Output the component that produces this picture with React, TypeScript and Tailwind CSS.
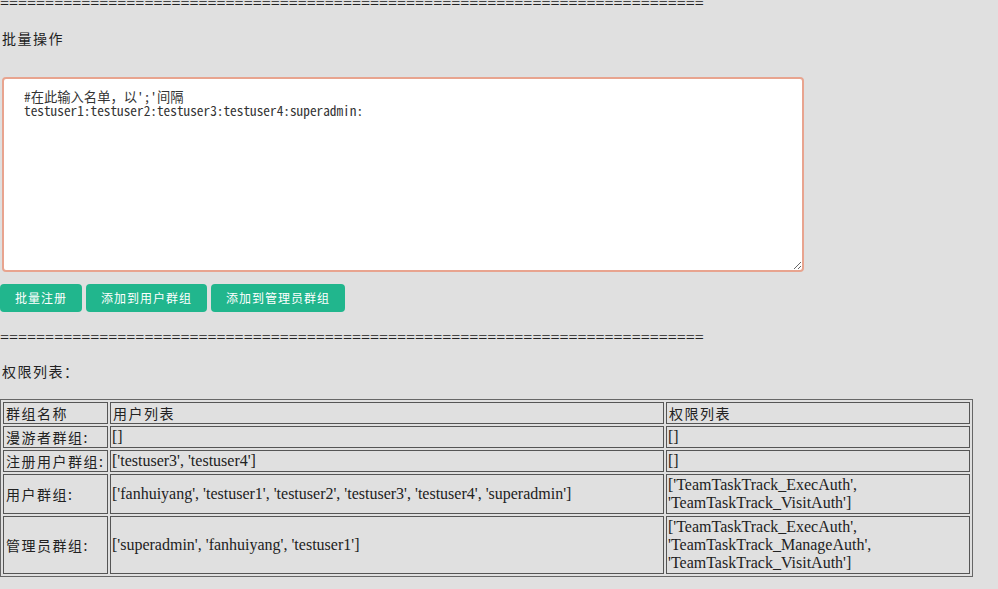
import React from 'react';

const serif = "font-['Liberation_Serif','Noto_Sans_CJK_SC',serif]";
const line = '='.repeat(78);

const rows = [
  { name: '漫游者群组:', users: '[]', auths: '[]' },
  { name: '注册用户群组:', users: "['testuser3', 'testuser4']", auths: '[]' },
  {
    name: '用户群组:',
    users: "['fanhuiyang', 'testuser1', 'testuser2', 'testuser3', 'testuser4', 'superadmin']",
    auths: "['TeamTaskTrack_ExecAuth', 'TeamTaskTrack_VisitAuth']",
  },
  {
    name: '管理员群组:',
    users: "['superadmin', 'fanhuiyang', 'testuser1']",
    auths: "['TeamTaskTrack_ExecAuth', 'TeamTaskTrack_ManageAuth', 'TeamTaskTrack_VisitAuth']",
  },
];

export default function App() {
  const cell = 'border border-[#555] px-[1px] py-[1px] align-middle leading-[18px]';
  // label cells use the CJK font directly so the line box stays 18px
  const label = `${cell} text-[14px] tracking-[1.5px] pl-[2px] font-['Noto_Sans_CJK_SC',sans-serif]`;

  return (
    <div className={`min-h-[589px] w-[998px] overflow-hidden bg-[#e0e0e0] text-[16px] text-[#222] ${serif}`}>
      <div className="-mt-[5px] leading-[18px]">{line}</div>

      <div className="mt-[15px] pl-[2px] text-[14px] leading-[20px] tracking-[1.5px] font-['Noto_Sans_CJK_SC',sans-serif]">
        批量操作
      </div>

      <div className="mt-[29px] flex pl-[2px]">
        <textarea
          className="h-[195px] w-[802px] rounded-[4px] border-2 border-[#e8a48f] bg-white px-[20px] py-[11px] text-[13.3px] leading-[14px] text-[#333] outline-none font-['Noto_Sans_Mono_CJK_SC','Liberation_Mono',monospace]"
          defaultValue={"#在此输入名单，以';'间隔\ntestuser1:testuser2:testuser3:testuser4:superadmin:"}
        />
      </div>

      <div className="mt-[12px] flex gap-[4px]">
        {['批量注册', '添加到用户群组', '添加到管理员群组'].map((t) => (
          <button
            key={t}
            className="h-[28px] rounded-[4px] bg-[#21b68d] px-[15px] text-[12px] tracking-[1px] text-white font-['Noto_Sans_CJK_SC',sans-serif]"
          >
            {t}
          </button>
        ))}
      </div>

      <div className="mt-[17px] leading-[18px]">{line}</div>

      <div className="mt-[14px] pl-[2px] text-[14px] leading-[20px] tracking-[1.5px] font-['Noto_Sans_CJK_SC',sans-serif]">
        权限列表：
      </div>

      <table className="mt-[18px] w-[973px] table-fixed border-separate border-spacing-[2px] border border-[#666]">
        <colgroup>
          <col className="w-[105px]" />
          <col className="w-[554px]" />
          <col className="w-[304px]" />
        </colgroup>
        <tbody>
          <tr>
            <td className={label}>群组名称</td>
            <td className={label}>用户列表</td>
            <td className={label}>权限列表</td>
          </tr>
          {rows.map((r) => (
            <tr key={r.name}>
              <td className={label}>{r.name}</td>
              <td className={cell}>{r.users}</td>
              <td className={cell}>{r.auths}</td>
            </tr>
          ))}
        </tbody>
      </table>
    </div>
  );
}
